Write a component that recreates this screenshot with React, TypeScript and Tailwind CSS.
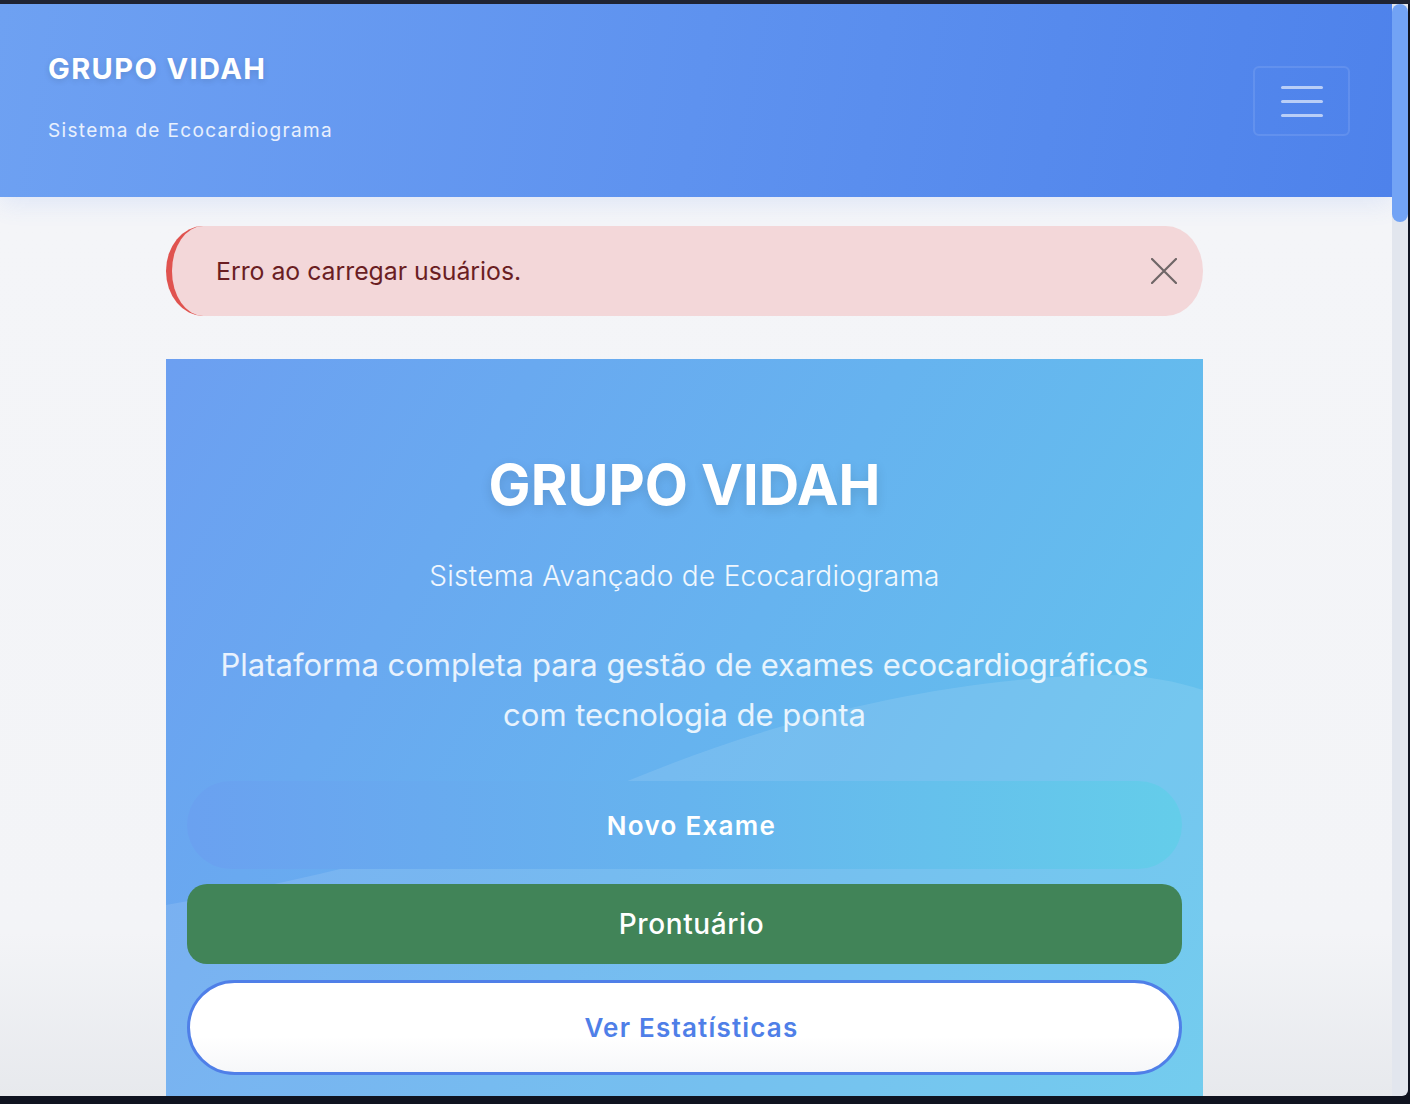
import React from "react";

function CloseIcon() {
  return (
    <svg width="26" height="26" viewBox="0 0 26 26" fill="none">
      <path d="M1 1 L25 25 M25 1 L1 25" stroke="#6f6667" strokeWidth="2.2" strokeLinecap="round" />
    </svg>
  );
}

export default function App() {
  const font = { fontFamily: "Inter, 'Noto Sans', sans-serif" };
  return (
    <div className="h-screen w-full overflow-hidden bg-[#0f1320] flex flex-col" style={font}>
      <div className="h-[4px] bg-[#1f2433] shrink-0" />
      <div className="flex-1 min-h-0 flex pr-[2px] pb-[8px]">
        <div className="flex-1 min-w-0 flex rounded-br-[6px] overflow-hidden">
          <div className="flex-1 min-w-0 flex flex-col overflow-hidden bg-[linear-gradient(180deg,#ebf0fa_0%,#f4f5f8_20%,#f3f4f7_85%,#e7e9ed_100%)]">
            <header className="relative z-10 h-[193px] shrink-0 bg-[linear-gradient(100deg,#6ea1f2_0%,#5e92ef_50%,#4e82eb_100%)] shadow-[0_6px_24px_rgba(79,130,235,0.12)] flex items-start justify-between pl-[48px] pr-[42px]">
              <div className="flex flex-col">
                <div className="mt-[45px] text-[29px] leading-[40px] font-bold tracking-[1.4px] text-white [text-shadow:0_2px_6px_rgba(0,0,0,0.12)]">
                  GRUPO VIDAH
                </div>
                <div className="mt-[29px] text-[19px] leading-[26px] tracking-[1.35px] text-white/85">
                  Sistema de Ecocardiograma
                </div>
              </div>
              <button className="mt-[62px] w-[97px] h-[70px] rounded-[6px] border-2 border-white/10 flex flex-col items-center justify-center gap-[11px]">
                <span className="block w-[42px] h-[3px] rounded-full bg-white/60" />
                <span className="block w-[42px] h-[3px] rounded-full bg-white/60" />
                <span className="block w-[42px] h-[3px] rounded-full bg-white/60" />
              </button>
            </header>
            <main className="flex-1 min-h-0 pl-[166px]">
              <div className="w-[1037px]">
                <div className="mt-[29px] h-[90px] rounded-[38px/46px] border-l-[6px] border-[#e0534f] bg-[#f3d7d9] flex items-center justify-between pl-[44px] pr-[26px]">
                  <span className="mt-[2px] text-[24.8px] text-[#6a1e23]">Erro ao carregar usuários.</span>
                  <CloseIcon />
                </div>
                <section className="relative mt-[43px] overflow-hidden bg-[linear-gradient(120deg,#6c9ff1_0%,#66b3ef_50%,#62c7ec_100%)] px-[21px] pt-[92px] pb-[60px]">
                  <svg className="absolute left-0 top-0 pointer-events-none" width="1037" height="1000" viewBox="0 0 1037 1000">
                    <path
                      d="M0,546 C150,520 330,475 464,421 C600,365 760,320 934,316 C975,315 1010,322 1037,331 L1037,1000 L0,1000 Z"
                      fill="rgba(255,255,255,0.11)"
                    />
                  </svg>
                  <div className="relative flex flex-col items-center">
                    <h1 className="text-[56px] leading-[68px] font-bold tracking-[0px] text-white [text-shadow:0_4px_12px_rgba(0,0,0,0.12)]">
                      GRUPO VIDAH
                    </h1>
                    <p className="mt-[37px] text-[28px] leading-[40px] font-light tracking-[0.3px] text-white/90">
                      Sistema Avançado de Ecocardiograma
                    </p>
                    <p className="mt-[44px] text-[31px] leading-[50px] text-white/85 text-center max-w-[980px]">
                      Plataforma completa para gestão de exames ecocardiográficos com tecnologia de ponta
                    </p>
                  </div>
                  <div className="relative mt-[41px] flex flex-col gap-[15px]">
                    <button className="h-[88px] rounded-[44px] bg-[linear-gradient(90deg,#6aa1f0_0%,#66b4ee_50%,#64cdea_100%)] text-white text-[26px] font-semibold tracking-[1.3px] flex items-center justify-center">
                      <span className="inline-block w-[14px]" />
                      <span>Novo Exame</span>
                    </button>
                    <button className="h-[80px] rounded-[20px] bg-[#418458] text-white text-[28px] font-medium tracking-[0.6px] flex items-center justify-center">
                      <span className="inline-block w-[14px]" />
                      <span>Prontuário</span>
                    </button>
                    <button className="mt-[1px] h-[95px] rounded-[48px] border-[3px] border-[#4f7fe8] bg-[linear-gradient(180deg,#ffffff_0%,#ffffff_60%,#f6f7f9_100%)] text-[#4f7fe8] text-[26px] font-semibold tracking-[1.2px] flex items-center justify-center">
                      <span className="inline-block w-[14px]" />
                      <span>Ver Estatísticas</span>
                    </button>
                  </div>
                </section>
              </div>
            </main>
          </div>
          <div className="w-[16px] shrink-0 bg-[#e2e6ee]">
            <div className="h-[218px] rounded-full bg-[#72a3f5]" />
          </div>
        </div>
      </div>
    </div>
  );
}
